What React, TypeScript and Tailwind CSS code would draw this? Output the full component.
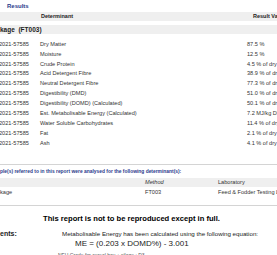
import React from "react";

const rows: [string, string][] = [
  ["Dry Matter", "87.5 %"],
  ["Moisture", "12.5 %"],
  ["Crude Protein", "4.5 % of dry matter"],
  ["Acid Detergent Fibre", "38.9 % of dry matter"],
  ["Neutral Detergent Fibre", "77.3 % of dry matter"],
  ["Digestibility (DMD)", "51.0 % of dry matter"],
  ["Digestibility (DOMD) (Calculated)", "50.1 % of dry matter"],
  ["Est. Metabolisable Energy (Calculated)", "7.2 MJ/kg DM"],
  ["Water Soluble Carbohydrates", "11.4 % of dry matter"],
  ["Fat", "2.1 % of dry matter"],
  ["Ash", "4.1 % of dry matter"],
];

export default function App() {
  return (
    <div
      className="w-[277px] h-[255px] overflow-hidden bg-white text-[#222] whitespace-nowrap"
      style={{ fontFamily: '"Liberation Sans", Arial, sans-serif' }}
    >
      <div className="h-[12px] pl-[7px] text-[6px] leading-[12px] font-bold text-[#2b3a8c]">Results</div>
      <div className="h-[9px] bg-[#efefef] grid grid-cols-[41px_212px_1fr] items-center text-[5.5px] font-bold">
        <div />
        <div>Determinant</div>
        <div>Result Value</div>
      </div>
      <div className="h-[4px]" />
      <div className="h-[9px] bg-[#efefef] flex items-center text-[6.5px] font-bold">kage&nbsp;&nbsp;(FT003)</div>
      <div className="h-[5px]" />
      {rows.map(([n, v]) => (
        <div key={n} className="h-[9.9px] grid grid-cols-[40px_207px_1fr] items-center text-[5.6px] text-[#333]">
          <div className="-ml-[1px]">2021-57585</div>
          <div>{n}</div>
          <div>{v}</div>
        </div>
      ))}
      <div className="h-[16px]" />
      <div className="border-t border-[#d4d4d4]" />
      <div className="h-[11px] flex items-end text-[4.9px] font-bold text-[#2b3a8c]">
        ple(s) referred to in this report were analysed for the following determinant(s):
      </div>
      <div className="h-[2px]" />
      <div className="h-[9px] bg-[#efefef] grid grid-cols-[145px_73px_1fr] items-center text-[5.6px] text-[#333]">
        <div />
        <div className="italic">Method</div>
        <div>Laboratory</div>
      </div>
      <div className="h-[11px] grid grid-cols-[145px_73px_1fr] items-center text-[5.6px] text-[#333]">
        <div>kage</div>
        <div>FT003</div>
        <div>Feed &amp; Fodder Testing Laboratory</div>
      </div>
      <div className="h-[7px]" />
      <div className="border-t border-[#d4d4d4]" />
      <div className="h-[19px] flex items-end justify-center pr-[14px] text-[7.6px] font-bold text-black">
        This report is not to be reproduced except in full.
      </div>
      <div className="h-[4px]" />
      <div className="grid grid-cols-[62px_1fr] text-[#222]">
        <div className="font-bold text-[7px] leading-[9.5px]">ents:</div>
        <div>
          <div className="text-[6.2px] leading-[9.5px]">Metabolisable Energy has been calculated using the following equation:</div>
          <div className="pl-[13px] text-[8px] leading-[12px]">ME = (0.203 x DOMD%) - 3.001</div>
        </div>
      </div>
      <div className="pl-[58px] text-[5px] text-[#555] leading-[10px]">NFU Grade for cereal hay + silage : D3</div>
    </div>
  );
}
